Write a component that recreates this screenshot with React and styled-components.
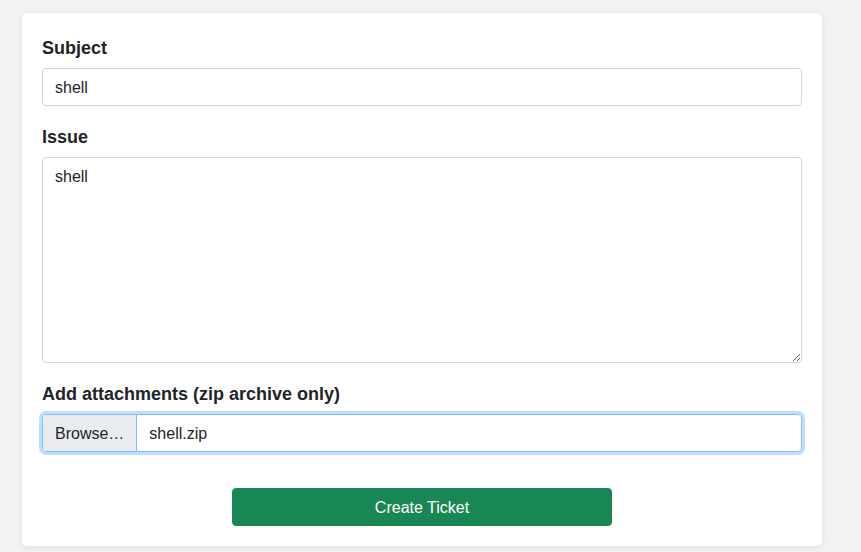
import React from "react";
import styled, { createGlobalStyle } from "styled-components";

const GlobalStyle = createGlobalStyle`
  html, body {
    margin: 0;
    padding: 0;
    background: #f2f2f2;
    font-family: "Liberation Sans", Arial, sans-serif;
    color: #212529;
  }
  * { box-sizing: border-box; }
`;

//styled ------------------------------------
const Page = styled.div`
  padding: 13px 0 6px 22px;
`;

const Card = styled.form`
  width: 800px;
  background: #fff;
  border-radius: 5px;
  padding: 20px;
  box-shadow: 0 1px 6px rgba(0, 0, 0, 0.08);
`;

const FormGroup = styled.div`
  margin-bottom: 16px;
`;

const Label = styled.label`
  display: block;
  font-size: 18px;
  font-weight: bold;
  line-height: 27px;
  padding-top: 2px;
  margin-bottom: 6px;
`;

const TextInput = styled.input`
  display: block;
  width: 100%;
  height: 38px;
  padding: 7px 12px 5px;
  font-family: inherit;
  font-size: 16px;
  line-height: 24px;
  color: #212529;
  border: 1px solid #ced4da;
  border-radius: 4px;
  outline: none;
`;

const TextArea = styled.textarea`
  display: block;
  width: 100%;
  height: 206px;
  padding: 7px 12px 5px;
  font-family: inherit;
  font-size: 16px;
  line-height: 24px;
  color: #212529;
  border: 1px solid #ced4da;
  border-radius: 4px;
  resize: vertical;
  outline: none;
`;

const FileBox = styled.div`
  display: flex;
  height: 38px;
  border: 1px solid #80bdff;
  border-radius: 4px;
  box-shadow: 0 0 0 3px rgba(0, 123, 255, 0.25);
  overflow: hidden;
  font-size: 16px;
  line-height: 24px;
`;

const BrowseButton = styled.span`
  display: flex;
  align-items: center;
  padding: 2px 12px 0;
  background: #e9ecef;
  border-right: 1px solid #80bdff;
  color: #212529;
`;

const FileName = styled.span`
  display: flex;
  align-items: center;
  padding: 2px 12px 0;
  flex: 1;
`;

const Actions = styled.div`
  display: flex;
  justify-content: center;
  padding-top: 20px;
`;

const SubmitButton = styled.button`
  width: 380px;
  height: 38px;
  padding: 2px 0 0;
  background: #198754;
  color: #fff;
  border: 1px solid #198754;
  border-radius: 4px;
  font-family: inherit;
  font-size: 16px;
  cursor: pointer;
`;

function App() {
  return (
    <>
      <GlobalStyle />
      <Page>
        <Card onSubmit={(e) => e.preventDefault()}>
          <FormGroup>
            <Label htmlFor="subject">Subject</Label>
            <TextInput id="subject" defaultValue="shell" />
          </FormGroup>
          <FormGroup>
            <Label htmlFor="issue">Issue</Label>
            <TextArea id="issue" defaultValue="shell" />
          </FormGroup>
          <FormGroup>
            <Label>Add attachments (zip archive only)</Label>
            <FileBox>
              <BrowseButton>Browse…</BrowseButton>
              <FileName>shell.zip</FileName>
            </FileBox>
          </FormGroup>
          <Actions>
            <SubmitButton type="submit">Create Ticket</SubmitButton>
          </Actions>
        </Card>
      </Page>
    </>
  );
}

export default App;
